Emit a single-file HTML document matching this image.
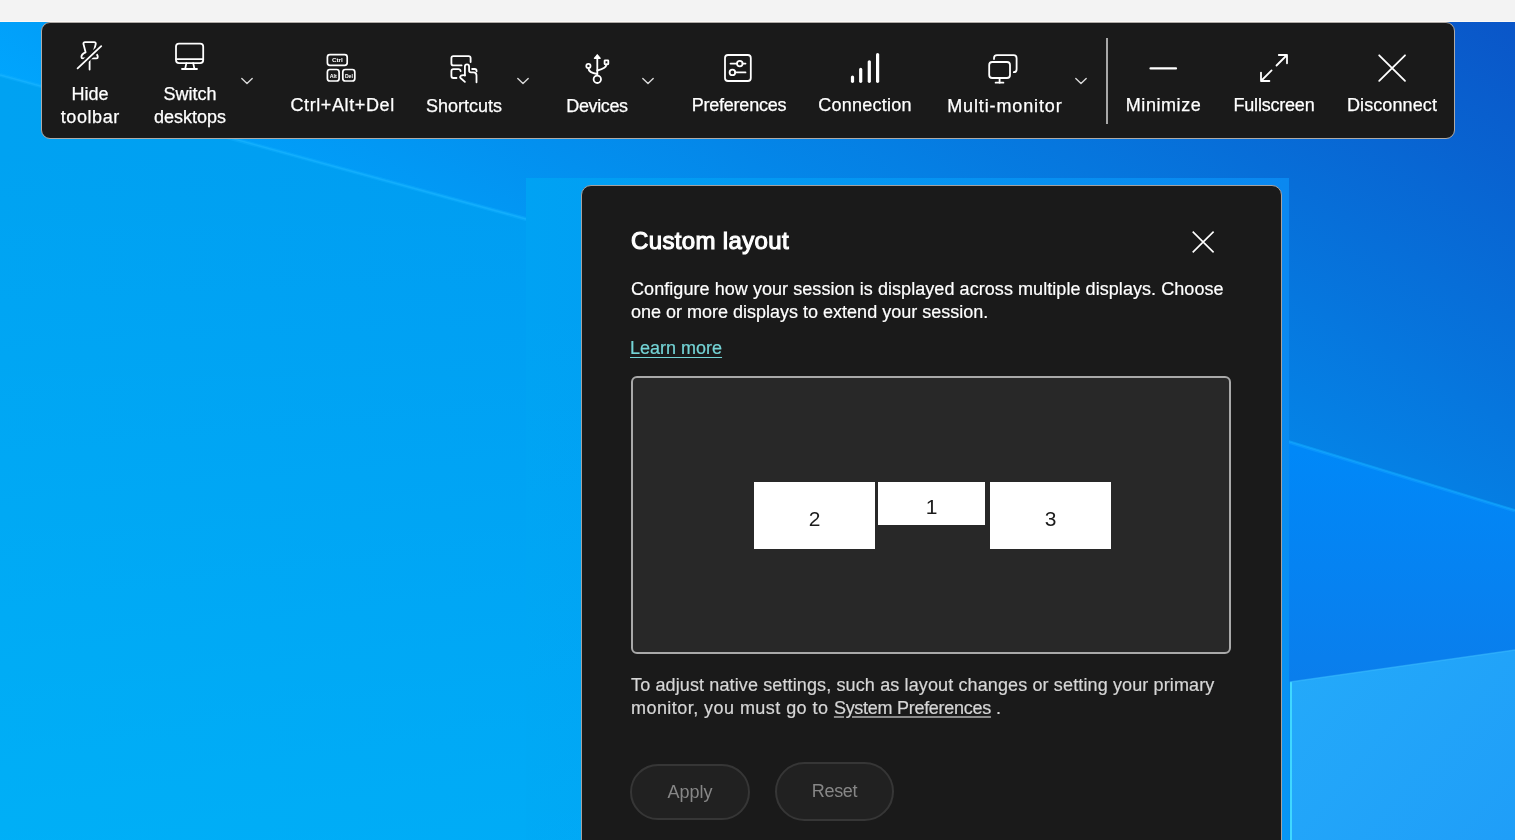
<!DOCTYPE html>
<html><head><meta charset="utf-8">
<style>
html,body{margin:0;padding:0}
body{width:1515px;height:840px;overflow:hidden;position:relative;background:#f3f3f3;font-family:"Liberation Sans",sans-serif}
.abs{position:absolute}
#topline{left:0;top:21px;width:1515px;height:1px;background:#fdf9f5}
#bg{left:0;top:22px}
#overlay{left:526px;top:178px;width:763px;height:662px;background:linear-gradient(180deg,rgba(0,200,255,0) 0%,rgba(0,200,255,0) 20%,rgba(0,200,255,0.22) 100%),linear-gradient(90deg,#00a2f3 0%,#0a88f0 100%)}
#toolbar{left:41px;top:22px;width:1412px;height:115px;border:1px solid #aeaaa7;border-radius:9px;background:#1a1a1a}
.lbl{position:absolute;color:#fff;font-size:18px;line-height:23px;white-space:nowrap;text-align:center;width:200px;-webkit-text-stroke:0.25px #fff}
.ico{position:absolute;left:0;top:0;overflow:visible}
#dialog{left:581px;top:185px;width:699px;height:700px;border:1px solid #a5a19e;border-radius:10px;background:#1a1a1a}
.dt{position:absolute;color:#fff;font-size:18px;line-height:23px;white-space:nowrap;-webkit-text-stroke:0.2px currentColor}
.mon{background:#fff;color:#1c1c1c;font-size:21px;text-align:center}
.btn{border:2px solid #363636;border-radius:30px;background:#212121;color:#878787;font-size:18px;text-align:center;box-sizing:border-box}
.sx{display:inline-block}
.lbl,.dt,.mon,.btn,#title{will-change:transform}
</style></head>
<body>
<div class="abs" id="topline"></div>
<svg class="abs" id="bg" width="1515" height="818" viewBox="0 22 1515 818">
  <defs>
    <linearGradient id="gTop" x1="1515" y1="22" x2="1065" y2="762" gradientUnits="userSpaceOnUse">
      <stop offset="0" stop-color="#0a56c8"/>
      <stop offset="1" stop-color="#00a8ff"/>
    </linearGradient>
    <linearGradient id="gBot" x1="0" y1="0" x2="1515" y2="0" gradientUnits="userSpaceOnUse">
      <stop offset="0" stop-color="#00a2f2"/>
      <stop offset="0.35" stop-color="#009cf2"/>
      <stop offset="1" stop-color="#0a70e6"/>
    </linearGradient>
    <linearGradient id="gV" x1="0" y1="150" x2="0" y2="840" gradientUnits="userSpaceOnUse">
      <stop offset="0" stop-color="#00c8ff" stop-opacity="0"/>
      <stop offset="1" stop-color="#00c8ff" stop-opacity="0.35"/>
    </linearGradient>
    <linearGradient id="gPanel" x1="1290" y1="650" x2="1515" y2="840" gradientUnits="userSpaceOnUse">
      <stop offset="0" stop-color="#24aafa"/>
      <stop offset="1" stop-color="#1f9ef8"/>
    </linearGradient>
  </defs>
  <rect x="0" y="22" width="1515" height="818" fill="url(#gTop)"/>
  <polygon points="0,75 526,219 1288,442 1515,511 1515,840 0,840" fill="url(#gBot)"/>
  <polygon points="0,75 526,219 1288,442 1515,511 1515,840 0,840" fill="url(#gV)"/>
  <polyline points="0,75 526,219 1288,442 1515,511" fill="none" stroke="#10b0ff" stroke-opacity="0.45" stroke-width="4"/>
  <polyline points="0,75 526,219 1288,442 1515,511" fill="none" stroke="#20b8ff" stroke-opacity="0.5" stroke-width="1.5"/>
  <linearGradient id="gR" x1="0" y1="450" x2="0" y2="680" gradientUnits="userSpaceOnUse"><stop offset="0" stop-color="#0088f8"/><stop offset="1" stop-color="#0a7eec"/></linearGradient>
  <polygon points="1288,442 1515,511 1515,650 1288,682" fill="url(#gR)"/>
  <polyline points="1288,442 1515,511" fill="none" stroke="#10a0ff" stroke-opacity="0.5" stroke-width="3"/>
  <polygon points="1290,682 1515,650 1515,840 1290,840" fill="url(#gPanel)"/>
  <line x1="1291" y1="682" x2="1291" y2="840" stroke="#40d8ff" stroke-width="2"/>
  <line x1="1290" y1="682" x2="1515" y2="650" stroke="#40c0ff" stroke-opacity="0.5" stroke-width="1.5"/>
</svg>
<div class="abs" id="overlay"></div>

<div class="abs" id="toolbar"></div>
<div class="lbl" style="left:-10px;top:82.8px">Hide<br><span style="letter-spacing:0.6px;padding-left:0.6px">toolbar</span></div>
<div class="lbl" style="left:90px;top:82.8px">Switch<br>desktops</div>
<div class="lbl" style="left:241.5px;top:94.3px;letter-spacing:0.61px;padding-left:0.61px">Ctrl+Alt+Del</div>
<div class="lbl" style="left:364.3px;top:94.8px">Shortcuts</div>
<div class="lbl" style="left:497px;top:94.8px;letter-spacing:-0.38px;padding-left:-0.38px">Devices</div>
<div class="lbl" style="left:638.8px;top:94.3px;letter-spacing:-0.22px">Preferences</div>
<div class="lbl" style="left:765px;top:94.3px;letter-spacing:0.26px">Connection</div>
<div class="lbl" style="left:904.1px;top:94.8px;letter-spacing:0.87px;padding-left:0.87px">Multi-monitor</div>
<div class="lbl" style="left:1062.9px;top:94.3px;letter-spacing:0.56px;padding-left:0.56px">Minimize</div>
<div class="lbl" style="left:1173.6px;top:94.3px;letter-spacing:-0.21px">Fullscreen</div>
<div class="lbl" style="left:1292.4px;top:94.3px;letter-spacing:0.11px">Disconnect</div>
<svg class="abs" style="left:0;top:0" width="1515" height="150" viewBox="0 0 1515 150">
 <g fill="none" stroke="#fff" stroke-width="1.8" stroke-linecap="round" stroke-linejoin="round">
  <!-- pin -->
  <path d="M85,42.2 L94.2,42.2 Q95.8,42.2 95.8,43.8 L93.6,52.3 C96,53.3 97.8,55 97.8,57 Q97.8,58.4 96.4,58.4 L82.8,58.4 Q81.4,58.4 81.4,57 C81.4,55 83.2,53.3 85.6,52.3 L83.4,43.8 Q83.4,42.2 85,42.2 Z"/>
  <line x1="89.6" y1="58.4" x2="89.6" y2="69.6"/>
  <line x1="77.6" y1="68.3" x2="101.2" y2="46.2" stroke="#1a1a1a" stroke-width="5.5"/>
  <line x1="77.6" y1="68.3" x2="101.2" y2="46.2"/>
  <!-- monitor -->
  <rect x="176" y="43.6" width="27.2" height="19.5" rx="3"/>
  <line x1="176" y1="59.1" x2="203.2" y2="59.1"/>
  <path d="M186.4,63.1 L185.2,68.6 M193.2,63.1 L194.4,68.6"/>
  <line x1="182" y1="69" x2="197" y2="69"/>
  <!-- ctrl alt del -->
  <rect x="327.4" y="54.7" width="19.8" height="10.6" rx="2.5" stroke-width="1.7"/>
  <rect x="327.4" y="69.5" width="11.7" height="11.5" rx="2.5" stroke-width="1.7"/>
  <rect x="342.8" y="69.5" width="12" height="11.5" rx="2.5" stroke-width="1.7"/>
  <!-- shortcuts -->
  <path d="M461.6,65.4 L453.4,65.4 Q451.4,65.4 451.4,63.4 L451.4,58.1 Q451.4,56.1 453.4,56.1 L468.6,56.1 Q470.6,56.1 470.6,58.1 L470.6,62.1"/>
  <path d="M456.5,78 L453.4,78 Q451.4,78 451.4,76 L451.4,71.2 Q451.4,69.2 453.4,69.2 L458.4,69.2 Q460.3,69.2 460.6,71.1"/>
  <path d="M464.9,75.4 L464.9,66.5 Q464.9,64.3 467,64.3 Q469.1,64.3 469.1,66.5 L469.1,70.5 Q469.1,72.3 471,72.3 L473.4,72.3 Q476.5,72.3 476.5,75.5 L476.5,82.3"/>
  <path d="M472.1,69 L474.6,69 Q476.6,69 476.6,71.3"/>
  <path d="M464.9,75.4 Q462.8,74.6 461,75.6 Q459.3,77 460.8,78.3 L464.9,81.9"/>
  <!-- usb -->
  <line x1="597.3" y1="55.5" x2="597.3" y2="74.8"/>
  <path d="M594.6,58.2 L597.3,55.2 L600,58.2 Z" fill="#fff" stroke-width="1.6"/>
  <circle cx="597.3" cy="79.3" r="3.7"/>
  <circle cx="588.4" cy="66" r="2.1"/>
  <path d="M588.4,68.1 C588.6,71.5 592,73.3 597.3,74"/>
  <rect x="604.6" y="60.3" width="3.7" height="4" rx="0.5"/>
  <path d="M606.4,64.3 C606.4,68 602,69.5 597.3,70.5"/>
  <!-- preferences -->
  <rect x="725" y="55" width="25.8" height="26" rx="3"/>
  <path d="M730.5,63.6 L737,63.6 M742.6,63.6 L745.5,63.6 M735.2,72.4 L745.5,72.4"/>
  <circle cx="739.8" cy="63.6" r="2.8"/>
  <circle cx="732.4" cy="72.4" r="2.8"/>
  <!-- connection -->
  <g stroke-width="3.2">
   <line x1="852.5" y1="77" x2="852.5" y2="81.3"/>
   <line x1="860.7" y1="69.4" x2="860.7" y2="81.3"/>
   <line x1="869.3" y1="61.8" x2="869.3" y2="81.3"/>
   <line x1="877.6" y1="54.5" x2="877.6" y2="81.3"/>
  </g>
  <!-- multi monitor -->
  <rect x="989.2" y="62" width="20.8" height="16" rx="3"/>
  <line x1="999.6" y1="78" x2="999.6" y2="82.7"/>
  <line x1="995.6" y1="82.7" x2="1003.4" y2="82.7"/>
  <path d="M994,59 L994,58.2 Q994,55.2 997,55.2 L1013.6,55.2 Q1016.6,55.2 1016.6,58.2 L1016.6,69.2 Q1016.6,72.2 1013.8,72.2"/>
  <!-- minimize -->
  <line x1="1150.5" y1="68.4" x2="1176" y2="68.4" stroke-width="2.2"/>
  <!-- fullscreen -->
  <path d="M1278.8,55 L1287,55 L1287,63.3 M1287,55 L1276.5,65.5"/>
  <path d="M1261,72.6 L1261,81 L1269.4,81 M1261,81 L1271.6,70.4"/>
  <!-- disconnect -->
  <path d="M1379.2,55.3 L1405,80.8 M1405,55.3 L1379.2,80.8"/>
 </g>
 <g fill="#fff" font-family="Liberation Sans" font-size="6" font-weight="bold" text-anchor="middle">
  <text x="337.4" y="62.1" textLength="11" lengthAdjust="spacingAndGlyphs">Ctrl</text>
  <text x="333.3" y="78.1" font-size="5.8" textLength="7.2" lengthAdjust="spacingAndGlyphs">Alt</text>
  <text x="348.9" y="78.1" font-size="5.8" textLength="8" lengthAdjust="spacingAndGlyphs">Del</text>
 </g>
 <g fill="none" stroke="#d8d8d8" stroke-width="1.4" stroke-linecap="round" stroke-linejoin="round">
  <polyline points="241.8,78.4 247,83.5 252.2,78.4"/>
  <polyline points="517.8,78.4 523,83.5 528.2,78.4"/>
  <polyline points="642.8,78.4 648,83.5 653.2,78.4"/>
  <polyline points="1075.8,78.4 1081,83.5 1086.2,78.4"/>
 </g>
 <rect x="1106" y="38" width="2" height="86" fill="#a8a8a8"/>
</svg>


<div class="abs" id="dialog"></div>
<div class="abs" id="title" style="left:631px;top:226px;color:#fff;font-size:24px;line-height:30px;font-weight:normal;-webkit-text-stroke:1.1px #fff;white-space:nowrap;letter-spacing:0.35px">Custom layout</div>
<svg class="abs" style="left:0;top:0" width="1515" height="840" viewBox="0 0 1515 840">
 <path d="M1192.7,231.6 L1213.6,252.4 M1213.6,231.6 L1192.7,252.4" stroke="#fff" stroke-width="1.6" fill="none"/>
</svg>
<div class="dt" style="left:631px;top:278.4px"><span style="letter-spacing:0.06px">Configure how your session is displayed across multiple displays. Choose</span><br>one or more displays to extend your session.</div>
<div class="dt" style="left:630px;top:336.7px;color:#74d4d6;text-decoration:underline;text-underline-offset:2.5px">Learn more</div>
<div class="abs" style="left:631px;top:376px;width:596px;height:274px;border:2px solid #a9a9a9;border-radius:6px;background:#282828"></div>
<div class="abs mon" style="left:754px;top:482px;width:121px;height:67px;line-height:73px">2</div>
<div class="abs mon" style="left:878px;top:482px;width:107px;height:43px;line-height:50px">1</div>
<div class="abs mon" style="left:990px;top:482px;width:121px;height:67px;line-height:73px">3</div>
<div class="dt" style="left:631px;top:674px;color:#d6d6d6;line-height:22.5px;letter-spacing:0.125px">To adjust native settings, such as layout changes or setting your primary<br><span style="letter-spacing:0.45px">monitor, you must go to </span><span style="letter-spacing:-0.28px;text-decoration:underline;text-decoration-color:#8a8a8a;text-decoration-thickness:1.6px;text-underline-offset:2px">System Preferences</span> .</div>
<div class="abs btn" style="left:630px;top:764px;width:120px;height:56px;line-height:52px">Apply</div>
<div class="abs btn" style="left:775px;top:762px;width:119px;height:59px;line-height:55px;letter-spacing:-0.3px">Reset</div>

</body></html>
